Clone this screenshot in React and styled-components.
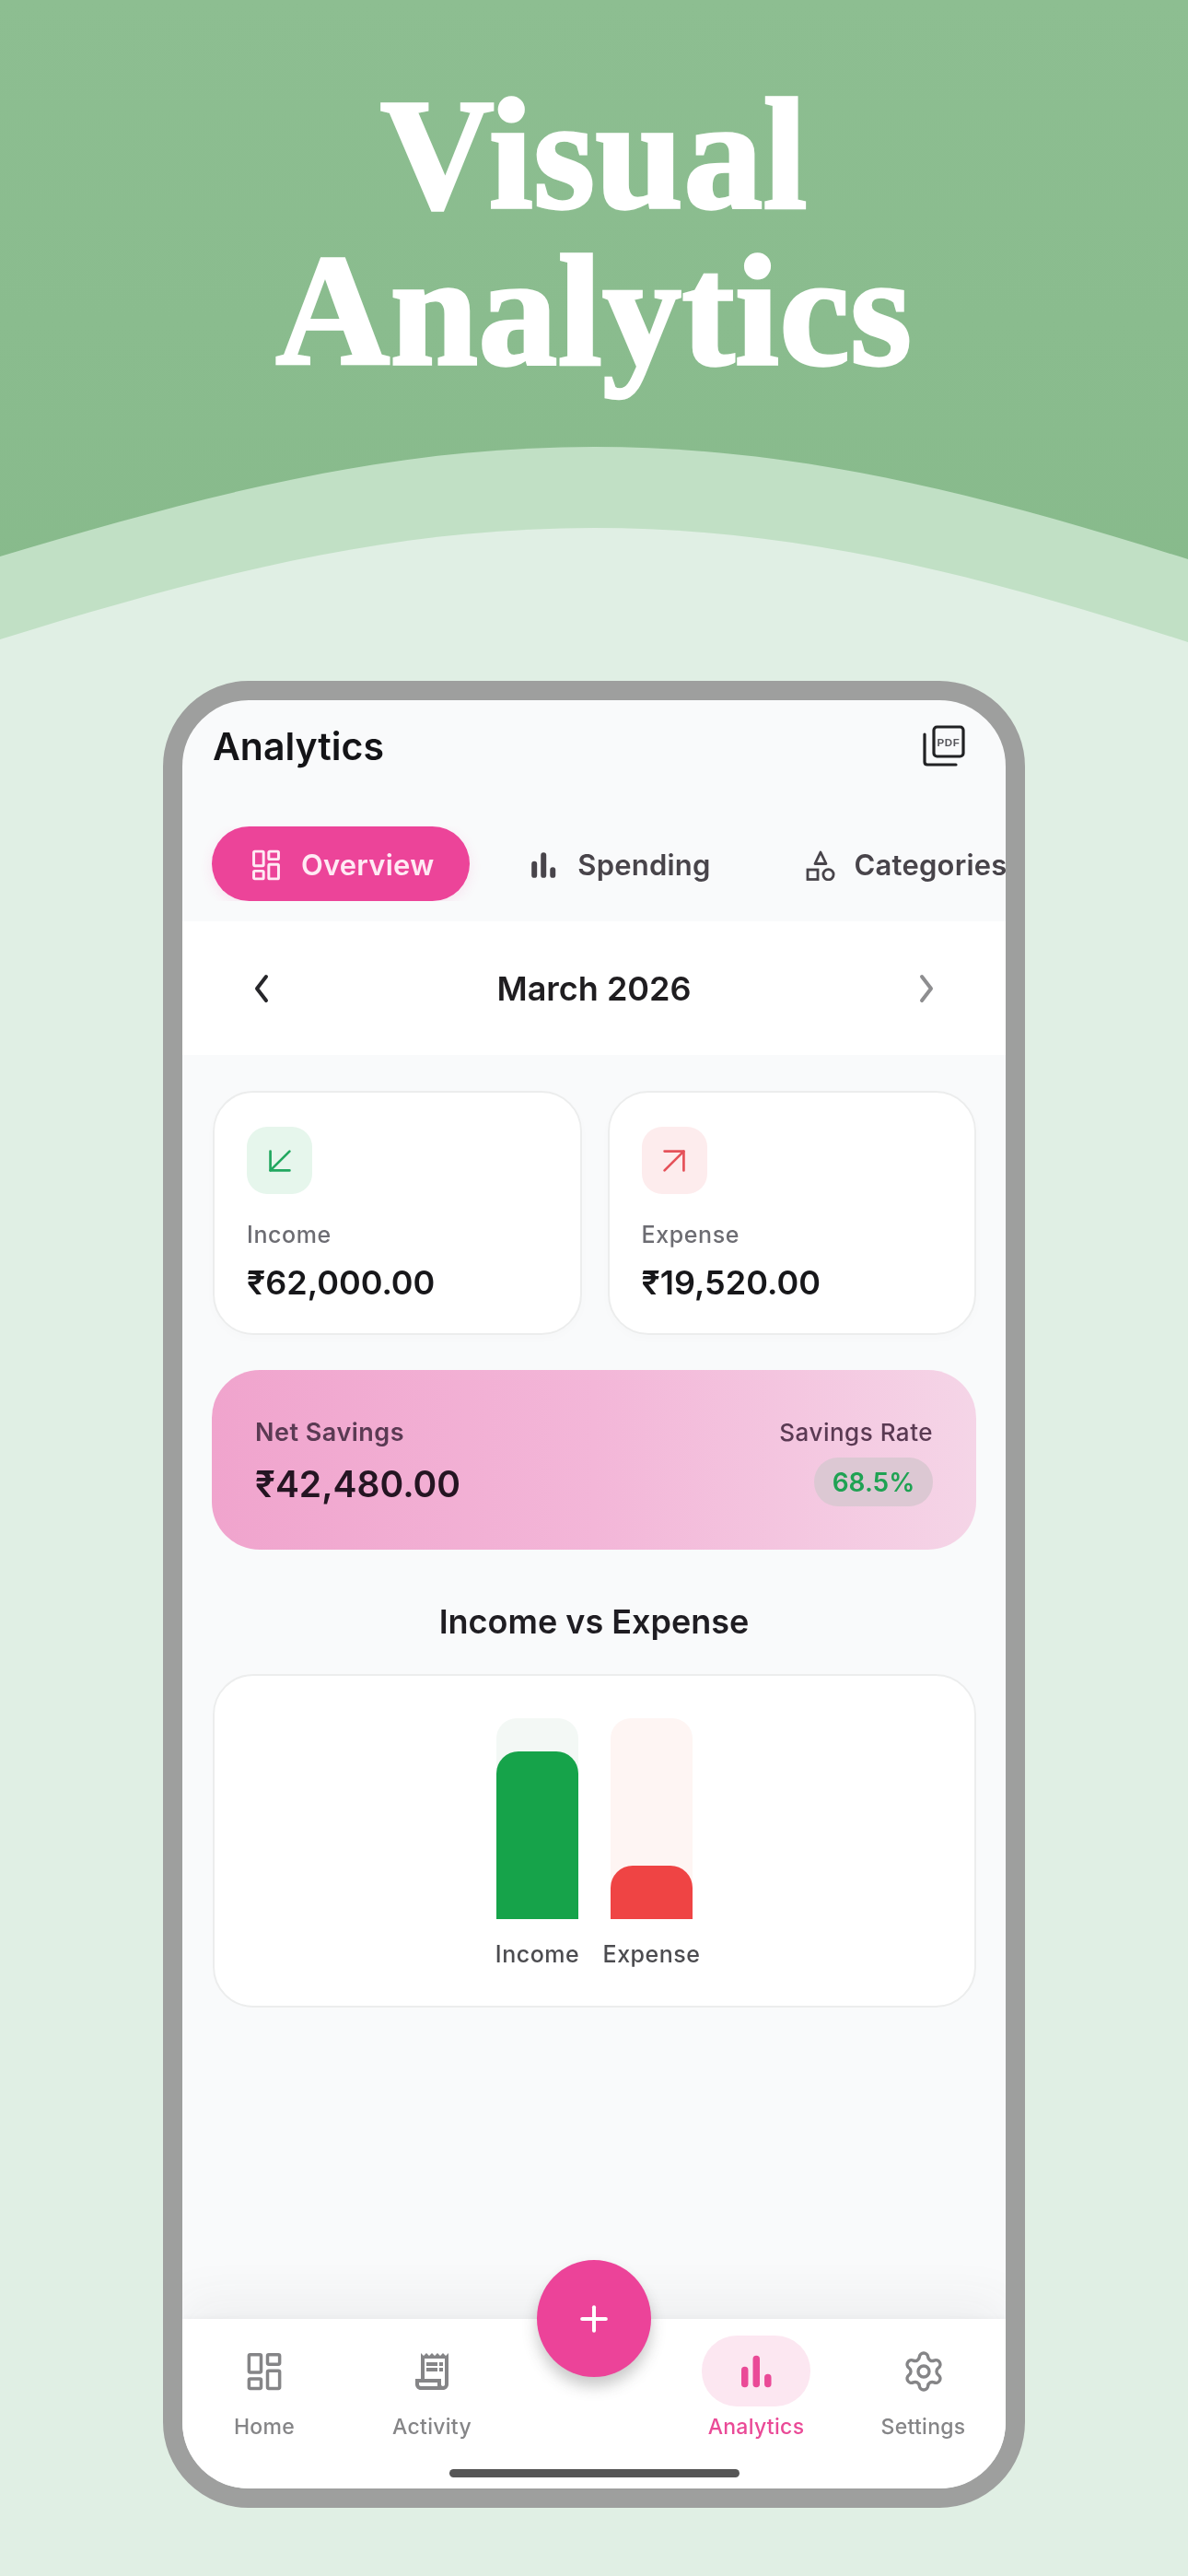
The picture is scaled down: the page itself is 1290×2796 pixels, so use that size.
import React from "react";
import styled, { createGlobalStyle } from "styled-components";
import { ArrowDownLeft, ArrowUpRight, Plus, Settings } from "lucide-react";
import { MdOutlineReceiptLong } from "react-icons/md";

const Global = createGlobalStyle`
  html, body { margin: 0; padding: 0; background: #e0efe4; }
  * { box-sizing: border-box; }
`;

const Page = styled.div`
  width: 1290px;
  height: 2796px;
  overflow: hidden;
  background: #e0efe4;
  font-family: Inter, "Noto Sans", sans-serif;
`;

const Hero = styled.header`
  background: linear-gradient(180deg, #8dbe91 0%, #87ba8b 100%);
  height: 697px;
  display: flex;
  flex-direction: column;
  justify-content: flex-end;
`;

const HeroTitle = styled.h1`
  margin: 0 0 62px;
  color: #fff;
  font-family: "Liberation Serif", serif;
  font-weight: 700;
  font-size: 171px;
  line-height: 170px;
  letter-spacing: 0.8px;
  text-align: center;
  -webkit-text-stroke: 3.5px #fff;
`;

const Wave = styled.svg`
  display: block;
  width: 1290px;
  height: 212px;
`;

const Phone = styled.div`
  width: 936px;
  height: 1983px;
  margin: 42px 0 0 177px;
  border: 21px solid #9e9f9e;
  border-radius: 93px;
  overflow: hidden;
  background: #f9fafb;
`;

const Screen = styled.div`
  height: 100%;
  display: flex;
  flex-direction: column;
  filter: blur(0.6px);
`;

const TopBar = styled.div`
  height: 100px;
  padding: 0 44px 0 33px;
  display: flex;
  align-items: center;
  justify-content: space-between;
`;

const ScreenTitle = styled.h2`
  margin: 0;
  font-size: 41px;
  font-weight: 600;
  color: #141417;
`;

const Tabs = styled.div`
  margin-top: 37px;
  padding-left: 32px;
  display: flex;
  gap: 22px;
  overflow: hidden;
`;

const Tab = styled.div`
  flex: none;
  height: 81px;
  padding: 2px 39px 0 42px;
  display: flex;
  align-items: center;
  gap: 21px;
  border-radius: 41px;
  font-size: 31px;
  font-weight: 600;
  letter-spacing: 0.2px;
  white-space: nowrap;
  color: ${(p) => (p.$active ? "#ffeaf4" : "#48444a")};
  background: ${(p) => (p.$active ? "#ec4499" : "transparent")};
  box-shadow: ${(p) => (p.$active ? "0 4px 14px rgba(236,68,153,.12)" : "none")};
`;

const MonthBar = styled.div`
  margin-top: 22px;
  height: 145px;
  padding: 0 74px;
  background: #fff;
  display: flex;
  align-items: center;
  justify-content: space-between;
`;

const MonthLabel = styled.div`
  font-size: 36px;
  font-weight: 600;
  color: #1f1d20;
`;

const Main = styled.main`
  flex: 1;
  padding: 39px 32px 0 33px;
  display: flex;
  flex-direction: column;
`;

const CardRow = styled.div`
  display: grid;
  grid-template-columns: 1fr 1fr;
  gap: 28px;
`;

const StatCard = styled.div`
  height: 265px;
  padding: 37px 35px 0;
  background: #fff;
  border: 2px solid #eceded;
  border-radius: 44px;
  box-shadow: 0 4px 12px rgba(0, 0, 0, 0.015);
`;

const StatIcon = styled.div`
  width: 71px;
  height: 73px;
  border-radius: 22px;
  display: flex;
  align-items: center;
  justify-content: center;
  color: ${(p) => p.$fg};
  background: ${(p) => p.$bg};
`;

const StatLabel = styled.div`
  margin-top: 28px;
  font-size: 25px;
  line-height: 32px;
  font-weight: 500;
  letter-spacing: 0.6px;
  color: #6c6c72;
`;

const StatValue = styled.div`
  margin-top: 13px;
  font-size: 36px;
  line-height: 46px;
  font-weight: 600;
  color: #17171a;
`;

const SavingsCard = styled.div`
  margin: 38px 0 0 -1px;
  height: 195px;
  padding: 0 47px;
  border-radius: 52px;
  background: linear-gradient(90deg, #f0a4cd 0%, #f3b6d8 50%, #f5d5e7 100%);
  display: flex;
  align-items: center;
  justify-content: space-between;
`;

const SavingsColumn = styled.div`
  display: flex;
  flex-direction: column;
  align-items: ${(p) => (p.$end ? "flex-end" : "flex-start")};
`;

const SavingsLabel = styled.div`
  margin-top: 4px;
  font-size: ${(p) => (p.$small ? "26px" : "27px")};
  line-height: 34px;
  font-weight: ${(p) => (p.$small ? 500 : 600)};
  letter-spacing: 0.5px;
  color: #5a3a53;
`;

const SavingsValue = styled.div`
  margin-top: 14px;
  font-size: 39px;
  line-height: 50px;
  font-weight: 600;
  color: #241522;
`;

const RateBadge = styled.div`
  margin-top: 10px;
  width: 129px;
  height: 53px;
  border-radius: 26px;
  background: #dcc8d3;
  color: #1fa253;
  font-size: 28px;
  font-weight: 600;
  display: flex;
  align-items: center;
  justify-content: center;
`;

const SectionTitle = styled.h3`
  margin: 56px 0 0 -1px;
  height: 44px;
  font-size: 36px;
  line-height: 44px;
  font-weight: 600;
  text-align: center;
  color: #1f1d22;
`;

const ChartCard = styled.div`
  margin-top: 35px;
  height: 362px;
  padding-top: 46px;
  background: #fff;
  border: 2px solid #eceded;
  border-radius: 44px;
  display: flex;
  justify-content: center;
  gap: 35px;
`;

const BarColumn = styled.div`
  width: 89px;
  display: flex;
  flex-direction: column;
  align-items: center;
`;

const BarTrack = styled.div`
  width: 89px;
  height: 218px;
  border-radius: 22px 22px 0 0;
  overflow: hidden;
  background: ${(p) => p.$bg};
  display: flex;
  align-items: flex-end;
`;

const BarFill = styled.div`
  width: 100%;
  border-radius: 24px 24px 0 0;
  background: ${(p) => p.$color};
`;

const BarLabel = styled.div`
  margin-top: 22px;
  font-size: 25px;
  line-height: 32px;
  font-weight: 500;
  letter-spacing: 0.5px;
  white-space: nowrap;
  color: #4c4c50;
`;

const BottomNav = styled.nav`
  position: relative;
  height: 184px;
  flex: none;
  background: #fff;
  box-shadow: 0 -20px 50px rgba(60, 70, 70, 0.06), 0 -2px 8px rgba(60, 70, 70, 0.04);
  display: flex;
  flex-direction: column;
`;

const NavGrid = styled.div`
  padding-top: 18px;
  display: grid;
  grid-template-columns: 178px 186px 166px 186px 177px;
`;

const NavItem = styled.div`
  display: flex;
  flex-direction: column;
  align-items: center;
  color: ${(p) => (p.$active ? "#ea4a97" : "#858587")};
`;

const NavIcon = styled.div`
  width: 118px;
  height: 77px;
  border-radius: 38px;
  display: flex;
  align-items: center;
  justify-content: center;
  background: ${(p) => (p.$active ? "#fce7f1" : "transparent")};
`;

const NavLabel = styled.div`
  margin-top: 8px;
  font-size: 23px;
  line-height: 28px;
  font-weight: 500;
  letter-spacing: 0.3px;
`;

const Fab = styled.div`
  position: absolute;
  left: 385px;
  top: -64px;
  width: 124px;
  height: 127px;
  border-radius: 50%;
  background: #ec4399;
  color: #fff;
  display: flex;
  align-items: center;
  justify-content: center;
  box-shadow: 0 10px 16px rgba(60, 60, 60, 0.28);
`;

const HomeBar = styled.div`
  margin: auto auto 12px;
  width: 315px;
  height: 9px;
  border-radius: 5px;
  background: #565656;
`;

const DashIcon = ({ size = 38, sw = 2 }) => (
  <svg width={size} height={size} viewBox="0 0 24 24" fill="none" stroke="currentColor" strokeWidth={sw}>
    <rect x="2.5" y="1.5" width="7.5" height="11" rx="0.8" />
    <rect x="14" y="1.5" width="7.5" height="6" rx="0.8" />
    <rect x="2.5" y="16.5" width="7.5" height="6" rx="0.8" />
    <rect x="14" y="11.5" width="7.5" height="11" rx="0.8" />
  </svg>
);

const BarsIcon = ({ size = 30 }) => (
  <svg width={size} height={size} viewBox="0 0 30 30" fill="currentColor">
    <rect x="3" y="11" width="5.6" height="17" rx="2.8" />
    <rect x="12.4" y="2" width="5.6" height="26" rx="2.8" />
    <rect x="21.8" y="17" width="5.6" height="11" rx="2.8" />
  </svg>
);

const ShapesIcon = () => (
  <svg width="32" height="34" viewBox="0 0 32 34" fill="none" stroke="currentColor" strokeWidth="2.8">
    <path d="M16 3 L22 15.5 H10 Z" strokeLinejoin="round" />
    <rect x="2" y="22" width="11" height="10.5" />
    <circle cx="24.5" cy="27.2" r="5.6" />
  </svg>
);

const PdfIcon = () => (
  <svg width="46" height="46" viewBox="0 0 46 46" fill="none">
    <rect x="12" y="2" width="32" height="32" rx="3.5" stroke="#222224" strokeWidth="3.2" />
    <path d="M2 10 V40 Q2 43 5 43 H36" stroke="#222224" strokeWidth="3.2" strokeLinecap="round" />
    <text x="28" y="23" textAnchor="middle" fontFamily="Liberation Sans" fontWeight="700" fontSize="11.5" letterSpacing="0.6" fill="#55555a">PDF</text>
  </svg>
);

const Chevron = ({ left, color }) => (
  <svg width="22" height="32" viewBox="0 0 22 32" fill="none" stroke={color} strokeWidth="4" strokeLinecap="round" strokeLinejoin="round">
    <path d={left ? "M17 3 L7 16 L17 29" : "M5 3 L15 16 L5 29"} />
  </svg>
);

export default function App() {
  return (
    <Page>
      <Global />
      <Hero>
        <HeroTitle>Visual<br />Analytics</HeroTitle>
        <Wave viewBox="0 485 1290 212" preserveAspectRatio="none">
          <path d="M0 604 C220 538 420 485 645 485 C870 485 1070 538 1290 607 V697 H0 Z" fill="#c1e0c5" />
          <path d="M0 694 C220 626 420 573 645 573 C870 573 1070 626 1290 697 V697 H0 Z" fill="#e0efe4" />
        </Wave>
      </Hero>
      <Phone>
        <Screen>
          <TopBar>
            <ScreenTitle>Analytics</ScreenTitle>
            <PdfIcon />
          </TopBar>
          <Tabs>
            <Tab $active><DashIcon size={34} sw={2.1} />Overview</Tab>
            <Tab><BarsIcon size={32} />Spending</Tab>
            <Tab><ShapesIcon />Categories</Tab>
          </Tabs>
          <MonthBar>
            <Chevron left color="#26262a" />
            <MonthLabel>March 2026</MonthLabel>
            <Chevron color="#8e8e90" />
          </MonthBar>
          <Main>
            <CardRow>
              <StatCard>
                <StatIcon $bg="#e6f6ec" $fg="#22a860"><ArrowDownLeft size={50} strokeWidth={1.3} /></StatIcon>
                <StatLabel>Income</StatLabel>
                <StatValue>₹62,000.00</StatValue>
              </StatCard>
              <StatCard>
                <StatIcon $bg="#fdeced" $fg="#e5525a"><ArrowUpRight size={50} strokeWidth={1.3} /></StatIcon>
                <StatLabel>Expense</StatLabel>
                <StatValue>₹19,520.00</StatValue>
              </StatCard>
            </CardRow>
            <SavingsCard>
              <SavingsColumn>
                <SavingsLabel>Net Savings</SavingsLabel>
                <SavingsValue>₹42,480.00</SavingsValue>
              </SavingsColumn>
              <SavingsColumn $end>
                <SavingsLabel $small>Savings Rate</SavingsLabel>
                <RateBadge>68.5%</RateBadge>
              </SavingsColumn>
            </SavingsCard>
            <SectionTitle>Income vs Expense</SectionTitle>
            <ChartCard>
              <BarColumn>
                <BarTrack $bg="#f3f8f5">
                  <BarFill $color="#16a34a" style={{ height: `${(182 / 218) * 100}%` }} />
                </BarTrack>
                <BarLabel>Income</BarLabel>
              </BarColumn>
              <BarColumn>
                <BarTrack $bg="#fef5f3">
                  <BarFill $color="#ef4444" style={{ height: `${(58 / 218) * 100}%` }} />
                </BarTrack>
                <BarLabel>Expense</BarLabel>
              </BarColumn>
            </ChartCard>
          </Main>
          <BottomNav>
            <NavGrid>
              <NavItem><NavIcon><DashIcon size={42} sw={2} /></NavIcon><NavLabel>Home</NavLabel></NavItem>
              <NavItem><NavIcon><MdOutlineReceiptLong size={48} /></NavIcon><NavLabel>Activity</NavLabel></NavItem>
              <div />
              <NavItem $active><NavIcon $active><BarsIcon size={40} /></NavIcon><NavLabel>Analytics</NavLabel></NavItem>
              <NavItem><NavIcon><Settings size={48} strokeWidth={1.7} /></NavIcon><NavLabel>Settings</NavLabel></NavItem>
            </NavGrid>
            <Fab><Plus size={44} strokeWidth={2.2} /></Fab>
            <HomeBar />
          </BottomNav>
        </Screen>
      </Phone>
    </Page>
  );
}
